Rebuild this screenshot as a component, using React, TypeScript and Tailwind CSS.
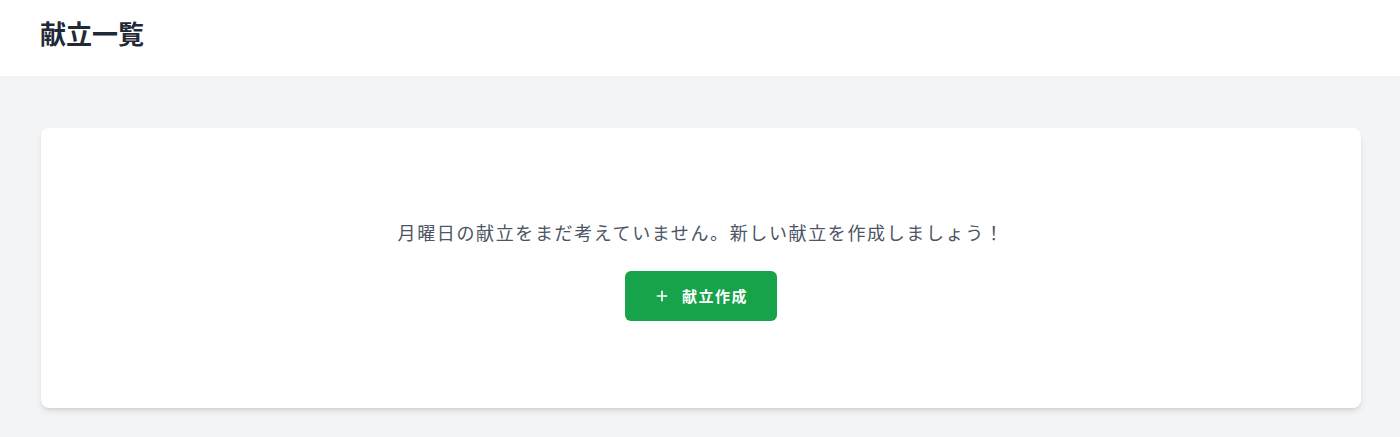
import { Plus } from "lucide-react";

const FONT = "font-['Noto_Sans_CJK_JP','Noto_Sans',sans-serif]";

export default function App() {
  return (
    <div className={`min-h-screen bg-[#f3f4f6] ${FONT}`}>
      {/* Header */}
      <header className="bg-white h-[76px]">
        <div className="px-10 pt-[17px]">
          <h1 className="text-[26px] leading-8 font-bold text-[#1f2937]">献立一覧</h1>
        </div>
      </header>

      {/* Main */}
      <main className="pl-[41px] pr-[39px] pt-[52px] pb-7">
        <div className="bg-white rounded-lg shadow-md pt-[90px] pb-[87px] flex flex-col items-center">
          <p className="text-lg leading-7 tracking-[0.09em] text-[#4b5563] mb-[25px]">
            月曜日の献立をまだ考えていません。新しい献立を作成しましょう！
          </p>
          <button className="inline-flex items-center gap-3 h-[50px] bg-[#16a34a] hover:bg-[#15803d] text-white font-bold text-[15px] tracking-[0.1em] px-[29px] rounded-md">
            <Plus className="w-4 h-4" strokeWidth={2.5} />
            献立作成
          </button>
        </div>
      </main>
    </div>
  );
}
